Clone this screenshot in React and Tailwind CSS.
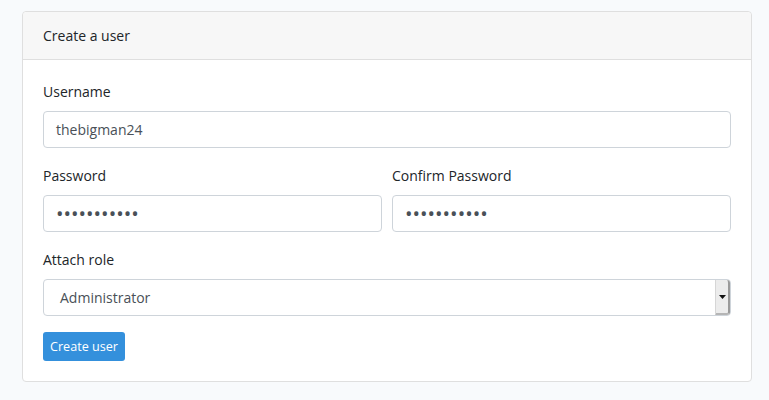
export default function App() {
  const font = { fontFamily: '"Open Sans", "Noto Sans", sans-serif' };

  return (
    <div className="min-h-[400px] bg-[#f8fafc] pt-[11px] px-[22px] text-[14px] text-[#212529]" style={font}>
      <div className="w-[730px] bg-white border border-[#dfdfdf] rounded-[4px]">
        <div className="bg-[#f7f7f7] border-b border-[#dfdfdf] px-[20px] py-[12px] leading-[23px] rounded-t-[4px]">
          Create a user
        </div>

        <div className="p-[20px]">
          <div className="mb-[16px]">
            <label className="block mb-[8px] leading-[23px]">Username</label>
            <div className="h-[37px] border border-[#ced4da] rounded-[4px] px-[12px] flex items-center text-[#495057]">
              thebigman24
            </div>
          </div>

          <div className="flex gap-[10px] mb-[16px]">
            <div className="flex-1">
              <label className="block mb-[8px] leading-[23px]">Password</label>
              <div className="h-[37px] border border-[#ced4da] rounded-[4px] px-[12px] flex items-center text-[#495057] text-[20px] tracking-[0px] leading-none">
                •••••••••••
              </div>
            </div>
            <div className="flex-1">
              <label className="block mb-[8px] leading-[23px]">Confirm Password</label>
              <div className="h-[37px] border border-[#ced4da] rounded-[4px] px-[12px] flex items-center text-[#495057] text-[20px] tracking-[0px] leading-none">
                •••••••••••
              </div>
            </div>
          </div>

          <div className="mb-[16px]">
            <label className="block mb-[8px] leading-[23px]">Attach role</label>
            <div className="h-[37px] border border-[#ced4da] rounded-[4px] flex items-stretch text-[#495057]">
              <div className="flex-1 flex items-center pl-[16px]">Administrator</div>
              <div className="w-[15px] bg-[#ececec] border-l border-[#d6d6d6] border-r-2 border-b-2 border-r-[#9a9a9a] border-b-[#b5b5b5] rounded-r-[3px] flex items-center justify-center">
                <svg width="7" height="4" viewBox="0 0 7 4">
                  <path d="M0 0h7L3.5 4z" fill="#111" />
                </svg>
              </div>
            </div>
          </div>

          <button className="h-[29px] px-[7px] bg-[#3490dc] text-white text-[12.6px] rounded-[3px] leading-[18px]">
            Create user
          </button>
        </div>
      </div>
    </div>
  );
}
